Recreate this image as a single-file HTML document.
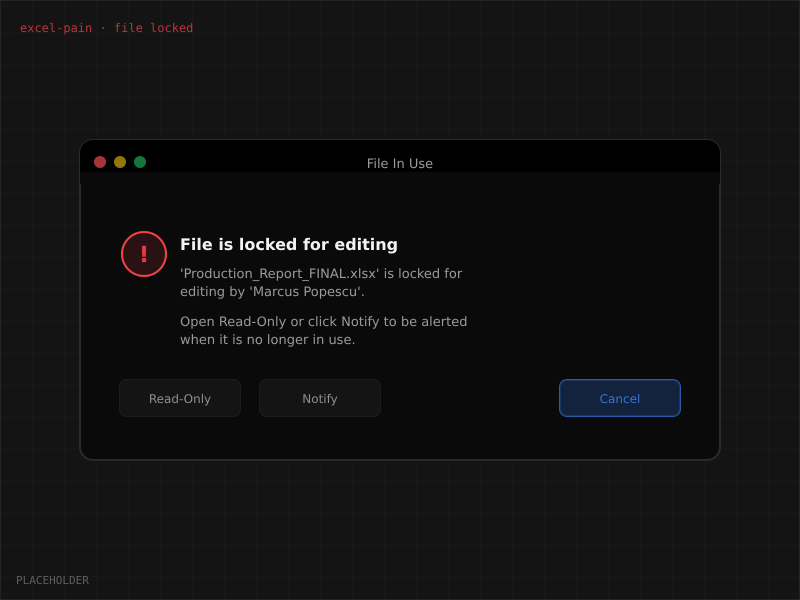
<!DOCTYPE html>
<html>
<head>
<meta charset="utf-8">
<style>
html,body{margin:0;padding:0;background:#141414}
body{width:800px;height:600px;position:relative;overflow:hidden;font-family:"DejaVu Sans","Liberation Sans",sans-serif;text-rendering:geometricPrecision}
.grid{position:absolute;left:0;top:0;width:800px;height:600px;background-image:linear-gradient(#181818 1px,transparent 1px),linear-gradient(90deg,#181818 1px,transparent 1px);background-size:32px 32px}
.frame{position:absolute;left:0;top:0;width:798px;height:598px;border:1px solid #242424}
.abs{position:absolute;white-space:nowrap}
.mono{font-family:"DejaVu Sans Mono","Liberation Mono",monospace}
.win{position:absolute;left:79px;top:139px;width:638px;height:318px;border:2px solid #2a2a2a;border-radius:14px;background:#0a0a0a;overflow:hidden}
.top{position:absolute;left:80px;top:140px;width:640px;height:44px;border-radius:13px 13px 0 0;background:#0a0a0a;overflow:hidden}
.tb{position:absolute;left:0;top:0;width:640px;height:32px;background:#000}
.dot{position:absolute;width:12px;height:12px;border-radius:50%;top:156px}
.btn{position:absolute;top:379px;width:120px;height:36px;border:1px solid #1e1e1e;border-radius:8px;background:#141414;color:#8f8f8f;font-size:12px;line-height:38px;text-align:center}
</style>
</head>
<body>
<div class="grid"></div>
<div class="frame"></div>
<div class="abs mono" style="left:20px;top:21px;font-size:12px;line-height:14px;color:#b8363c">excel-pain · file locked</div>
<div class="abs mono" style="left:16px;top:574px;font-size:11px;line-height:14px;color:#5e5e5e">PLACEHOLDER</div>
<div class="win"></div>
<div class="top"><div class="tb"></div></div>
<div class="dot" style="left:94px;background:#a5353b"></div>
<div class="dot" style="left:114px;background:#94760c"></div>
<div class="dot" style="left:134px;background:#14763a"></div>
<div class="abs" style="left:80px;width:640px;top:156px;text-align:center;font-size:13px;line-height:17px;color:#9a9a9a">File In Use</div>
<div class="abs" style="left:121px;top:231px;width:42px;height:42px;border:2px solid #ef4444;border-radius:50%;background:#2a1214;color:#e03b41;font-size:22px;font-weight:700;line-height:46px;text-align:center;-webkit-text-stroke:.3px #e03b41">!</div>
<div class="abs" style="left:180px;top:235px;font-size:16px;font-weight:700;line-height:20px;color:#f2f2f2">File is locked for editing</div>
<div class="abs" style="left:180px;top:265.6px;font-size:13px;line-height:18px;color:#9a9a9a">'Production_Report_FINAL.xlsx' is locked for<br>editing by 'Marcus Popescu'.</div>
<div class="abs" style="left:180px;top:313.6px;font-size:13px;line-height:18px;color:#9a9a9a">Open Read-Only or click Notify to be alerted<br>when it is no longer in use.</div>
<div class="btn" style="left:119px">Read-Only</div>
<div class="btn" style="left:259px">Notify</div>
<div class="btn" style="left:559px;border-color:#2a5aa8;box-shadow:inset 0 0 0 1px #1a3560;background:#13233d;color:#3473d6">Cancel</div>
</body>
</html>
